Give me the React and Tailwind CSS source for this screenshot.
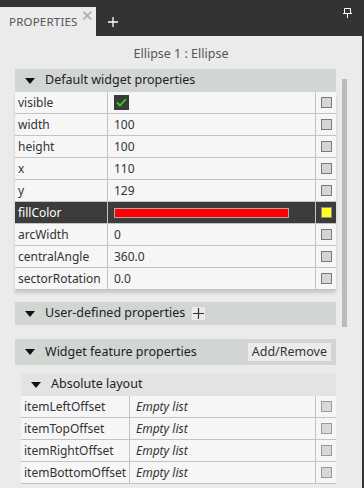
import { useState } from "react";

const DEFAULT_PROPS = [
  { name: "visible", type: "bool" },
  { name: "width", value: "100" },
  { name: "height", value: "100" },
  { name: "x", value: "110" },
  { name: "y", value: "129" },
  { name: "fillColor", type: "color" },
  { name: "arcWidth", value: "0" },
  { name: "centralAngle", value: "360.0" },
  { name: "sectorRotation", value: "0.0" },
];

const LAYOUT_PROPS = ["itemLeftOffset", "itemTopOffset", "itemRightOffset", "itemBottomOffset"];

function Caret() {
  return (
    <svg width="10" height="6" viewBox="0 0 10 6" className="shrink-0">
      <path d="M0 0 H10 L5 6 Z" fill="#111" />
    </svg>
  );
}

function SectionHeader({ label, indent, children, tall }) {
  return (
    <div
      className={`flex items-center ${tall ? "h-[26px]" : "h-[23px]"} ${
        indent ? "bg-[#e1e4e2] pl-[10px]" : "bg-[#d1d6d3] pl-[10px]"
      } pr-[5px] text-[12.5px] text-[#222]`}
    >
      <Caret />
      <span className="ml-[10px]">{label}</span>
      {children}
    </div>
  );
}

function Box({ selected, light }) {
  return (
    <div
      className={`w-[11px] h-[11px] border ${
        selected
          ? "bg-[#ffff22] border-[#8a8a8a]"
          : light
          ? "bg-[#d6d9d7] border-[#9a9a9a]"
          : "bg-[#d1d6d3] border-[#7a7a7a] border-[1.5px]"
      }`}
    />
  );
}

export default function App() {
  const [selected] = useState("fillColor");

  return (
    <div className="w-[364px] h-[488px] overflow-hidden bg-[#ebebeb] border-r-2 border-[#333] font-['Noto_Sans',sans-serif] text-[#333]">
      {/* Tab bar */}
      <div className="h-9 bg-[#333] flex items-end">
        <div className="relative w-24 h-[29px] bg-[#ebebeb] pl-[9px] pt-[6px] text-[11.5px] text-[#555] tracking-[0.2px]">
          PROPERTIES
          <span className="absolute right-[2px] top-[1px] text-[15px] leading-none text-[#aaa]">✕</span>
        </div>
        <div className="h-[29px] w-[34px] flex items-center justify-center">
          <svg width="10" height="10" viewBox="0 0 10 10">
            <path d="M5 0 V10 M0 5 H10" stroke="#fff" strokeWidth="1.3" />
          </svg>
        </div>
        <div className="flex-1 h-9 flex justify-end pr-[10px] pt-[8px]">
          <svg width="9" height="10" viewBox="0 0 9 10">
            <path d="M1.5 0.5 H7.5 V5.5 H1.5 Z M0 5.5 H9 M4.5 5.5 V10" stroke="#fff" strokeWidth="1" fill="none" />
          </svg>
        </div>
      </div>

      <div className="text-center text-[12.5px] text-[#555] pt-[9px] h-[33px]">Ellipse 1 : Ellipse</div>

      <div className="flex pl-[15px]">
        <div className="w-[321px]">
          <SectionHeader label="Default widget properties" />
          <div className="bg-[#f6f6f6] shadow-[0_3px_3px_rgba(0,0,0,0.15)]">
            {DEFAULT_PROPS.map((p) => {
              const sel = p.name === selected;
              return (
                <div
                  key={p.name}
                  className={`flex h-[22px] border-b border-[#c3c3c3] text-[12px] ${
                    sel ? "bg-[#3c3c3c] text-white" : "text-[#333]"
                  }`}
                >
                  <div className="w-[93px] border-r border-[#c3c3c3] pl-[3px] flex items-center">{p.name}</div>
                  <div className="flex-1 border-r border-[#c3c3c3] pl-[6px] flex items-center">
                    {p.type === "bool" && (
                      <div className="w-[15px] h-[15px] bg-[#3a3a3a] flex items-center justify-center">
                        <svg width="11" height="9" viewBox="0 0 11 9">
                          <path d="M1 4.5 L4 7.5 L10 1" stroke="#22dd22" strokeWidth="1.8" fill="none" />
                        </svg>
                      </div>
                    )}
                    {p.type === "color" && (
                      <div className="w-[175px] h-[10px] bg-[#ff0000] border border-[#aaa]" />
                    )}
                    {p.value}
                  </div>
                  <div className="w-5 flex items-center justify-center">
                    <Box selected={sel} />
                  </div>
                </div>
              );
            })}
          </div>

          <div className="mt-3">
            <SectionHeader label="User-defined properties">
              <div className="ml-[7px] w-[13px] h-[13px] bg-[#ebebeb] flex items-center justify-center">
                <svg width="11" height="11" viewBox="0 0 11 11">
                  <path d="M5.5 0 V11 M0 5.5 H11" stroke="#333" strokeWidth="1.2" />
                </svg>
              </div>
            </SectionHeader>
          </div>
        </div>
        <div className="ml-[6px] mt-[10px] w-[5px] h-[248px] bg-[#b9bdba]" />
      </div>

      <div className="pl-[15px] w-[336px] mt-3">
        <SectionHeader label="Widget feature properties" tall>
          <div className="ml-auto h-[18px] px-[4px] bg-[#ebebeb] text-[12.5px] leading-[18px] text-[#333]">Add/Remove</div>
        </SectionHeader>

        <div className="pl-[6px] mt-2">
          <SectionHeader label="Absolute layout" indent />
          <div className="bg-[#f6f6f6]">
            {LAYOUT_PROPS.map((n) => (
              <div key={n} className="flex h-[22px] border-b border-[#c3c3c3] text-[12px]">
                <div className="w-[109px] border-r border-[#c3c3c3] pl-[3px] flex items-center">{n}</div>
                <div className="flex-1 border-r border-[#c3c3c3] pl-[6px] flex items-center italic">Empty list</div>
                <div className="w-5 flex items-center justify-center">
                  <Box light />
                </div>
              </div>
            ))}
          </div>
        </div>
      </div>
    </div>
  );
}
